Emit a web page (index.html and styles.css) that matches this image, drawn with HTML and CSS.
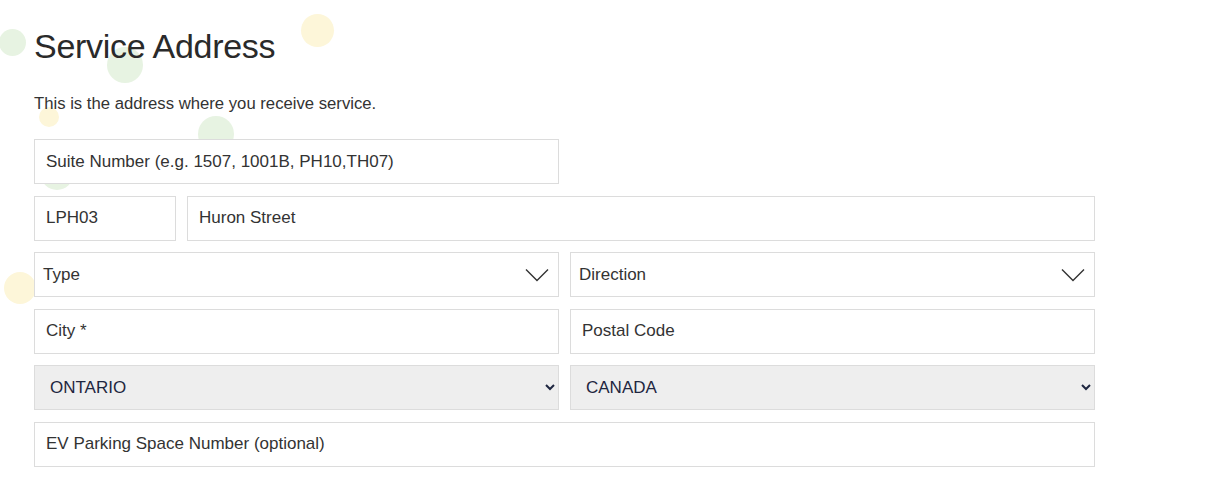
FILE: index.html
```html
<!DOCTYPE html>
<html lang="en">
<head>
<meta charset="utf-8">
<title>Service Address</title>
<link rel="stylesheet" href="styles.css">
</head>
<body>
<div class="page">
  <div class="dots" aria-hidden="true">
    <span class="dot green" style="left:-1px;top:29px;width:27px;height:27px"></span>
    <span class="dot green" style="left:107px;top:47px;width:36px;height:36px"></span>
    <span class="dot yellow" style="left:301px;top:14px;width:33px;height:33px"></span>
    <span class="dot yellow" style="left:39px;top:107px;width:20px;height:20px"></span>
    <span class="dot green" style="left:198px;top:116px;width:36px;height:36px"></span>
    <span class="dot green" style="left:41px;top:160px;width:32px;height:30px"></span>
    <span class="dot yellow" style="left:4px;top:272px;width:32px;height:32px"></span>
  </div>
  <h1 class="title">Service Address</h1>
  <p class="intro">This is the address where you receive service.</p>
  <form class="form">
    <div class="row half-left">
      <div class="field"><span class="ph">Suite Number (e.g. 1507, 1001B, PH10,TH07)</span></div>
    </div>
    <div class="row street">
      <div class="field"><span class="val">LPH03</span></div>
      <div class="field"><span class="val">Huron Street</span></div>
    </div>
    <div class="row two">
      <div class="field drop"><span class="ph">Type</span>
        <svg class="chev" width="24" height="14" viewBox="0 0 24 14"><path d="M1 1.5 L12 12.5 L23 1.5" fill="none" stroke="#333" stroke-width="1.4"/></svg>
      </div>
      <div class="field drop"><span class="ph">Direction</span>
        <svg class="chev" width="24" height="14" viewBox="0 0 24 14"><path d="M1 1.5 L12 12.5 L23 1.5" fill="none" stroke="#333" stroke-width="1.4"/></svg>
      </div>
    </div>
    <div class="row two">
      <div class="field"><span class="ph">City *</span></div>
      <div class="field"><span class="ph">Postal Code</span></div>
    </div>
    <div class="row two">
      <select class="sel"><option>ONTARIO</option></select>
      <select class="sel"><option>CANADA</option></select>
    </div>
    <div class="row">
      <div class="field"><span class="ph">EV Parking Space Number (optional)</span></div>
    </div>
  </form>
</div>
</body>
</html>
```

FILE: styles.css
```css
html, body {
  margin: 0;
  padding: 0;
  background: #ffffff;
}
body {
  font-family: "Liberation Sans", Arial, sans-serif;
  color: #333;
}
.page {
  position: relative;
  width: 1061px;
  padding: 26px 0 0 34px;
}
.dots {
  position: absolute;
  left: 0;
  top: 0;
  width: 0;
  height: 0;
}
.dot {
  position: absolute;
  border-radius: 50%;
}
.dot.green { background: #e7f3e2; }
.dot.yellow { background: #fdf6d9; }
.title {
  position: relative;
  margin: 0;
  font-weight: 400;
  font-size: 34px;
  line-height: 40px;
  color: #2a2a2a;
  letter-spacing: -0.3px;
}
.intro {
  position: relative;
  margin: 28px 0 0;
  font-size: 16.7px;
  line-height: 20px;
  color: #333;
}
.form {
  position: relative;
  margin-top: 25px;
  display: flex;
  flex-direction: column;
  gap: 11.6px;
}
.row {
  display: grid;
  grid-template-columns: 1fr;
  gap: 11px;
}
.row.half-left { grid-template-columns: 525px; }
.row.street { grid-template-columns: 142px 1fr; }
.row.two { grid-template-columns: 525px 525px; }
.field {
  box-sizing: border-box;
  height: 45px;
  border: 1px solid #dcdcdc;
  background: #fff;
  display: flex;
  align-items: center;
  padding: 0 11px;
  font-size: 17px;
  color: #333;
  position: relative;
}
.field.drop {
  padding-left: 8px;
  justify-content: space-between;
  padding-right: 9px;
}
.chev { display: block; }
.sel {
  box-sizing: border-box;
  height: 45px;
  border: 1px solid #dcdcdc;
  border-radius: 0;
  background-color: #eeeeee;
  font-family: "Liberation Sans", Arial, sans-serif;
  font-size: 17px;
  color: #1e2640;
  padding: 0 4px 0 11px;
  margin: 0;
  width: 100%;
}
```
